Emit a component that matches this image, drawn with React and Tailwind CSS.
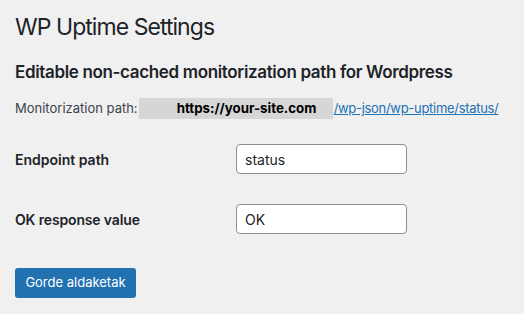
export default function App() {
  return (
    <div className="w-[524px] h-[314px] bg-[#f0f0f1] text-[#1d2327] overflow-hidden" style={{ fontFamily: "Inter, 'Liberation Sans', sans-serif" }}>
      <div className="pl-[15px] pt-[13px]">
        <h1 className="text-[23px] leading-[29px] font-normal tracking-[-0.95px] m-0">WP Uptime Settings</h1>
        <h2 className="mt-[19px] text-[17px] leading-[22px] font-semibold tracking-[-0.35px]">Editable non-cached monitorization path for Wordpress</h2>
        <div className="mt-[15px] flex items-center text-[13px] leading-[21px]">
          <span className="text-[#3c434a]">Monitorization path:</span>
          <span className="ml-[1px] w-[194px] h-[21px] bg-[#d6d6d6] pl-[38px] font-bold text-[13.3px] text-black leading-[21px]">https://your-site.com</span>
          <a className="ml-px text-[#2271b1] underline tracking-[-0.3px]">/wp-json/wp-uptime/status/</a>
        </div>
        <div className="mt-[25px] flex items-center h-[30px]">
          <div className="w-[221px] text-[14px] font-semibold">Endpoint path</div>
          <div className="w-[171px] h-[30px] border border-[#8c8f94] rounded-[4px] bg-white px-[8px] flex items-center text-[14px]">status</div>
        </div>
        <div className="mt-[30px] flex items-center h-[30px]">
          <div className="w-[221px] text-[14px] font-semibold tracking-[-0.15px]">OK response value</div>
          <div className="w-[171px] h-[30px] border border-[#8c8f94] rounded-[4px] bg-white px-[8px] flex items-center text-[14px]">OK</div>
        </div>
        <button className="mt-[34px] w-[121px] h-[30px] bg-[#2271b1] rounded-[3px] text-white text-[13px] flex items-center justify-center">Gorde aldaketak</button>
      </div>
    </div>
  );
}
